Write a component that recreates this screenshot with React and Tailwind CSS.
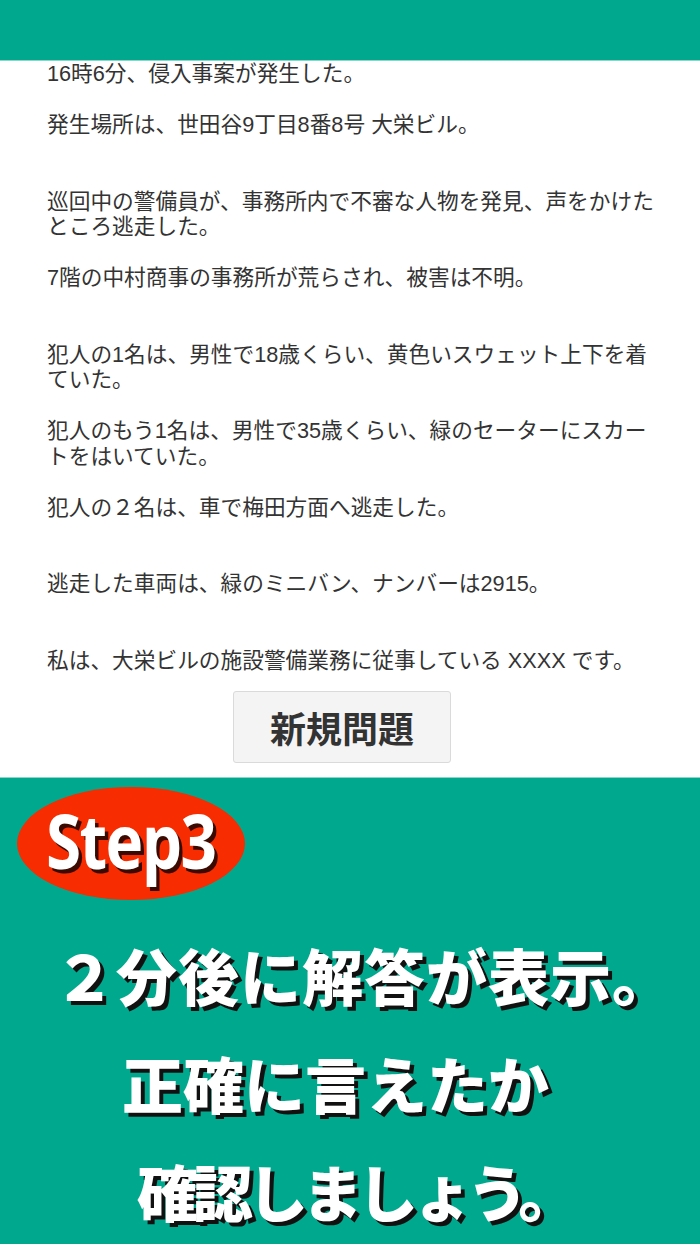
import React from 'react';

const lines = [
    '16時6分、侵入事案が発生した。',
    '',
    '発生場所は、世田谷9丁目8番8号 大栄ビル。',
    '',
    '',
    '巡回中の警備員が、事務所内で不審な人物を発見、声をかけた',
    'ところ逃走した。',
    '',
    '7階の中村商事の事務所が荒らされ、被害は不明。',
    '',
    '',
    '犯人の1名は、男性で18歳くらい、黄色いスウェット上下を着',
    'ていた。',
    '',
    '犯人のもう1名は、男性で35歳くらい、緑のセーターにスカー',
    'トをはいていた。',
    '',
    '犯人の２名は、車で梅田方面へ逃走した。',
    '',
    '',
    '逃走した車両は、緑のミニバン、ナンバーは2915。',
    '',
    '',
    '私は、大栄ビルの施設警備業務に従事している XXXX です。',
];

function App() {
    return (
        <div className="w-[700px] h-[1244px] overflow-hidden flex flex-col bg-white">
            {/* top bar */}
            <div className="h-[61px] shrink-0 bg-[#00a98e] border-b border-[#8ad7ca]" />

            {/* question text */}
            <div className="shrink-0 bg-white pl-[47px] pb-[14px]">
                <div className="text-[21.7px] text-[#333333] font-['Liberation_Sans_Narrow','Liberation_Sans','Noto_Sans_CJK_JP',sans-serif]">
                    {lines.map((line, i) => (
                        <div key={i} className="h-[25.5px] leading-[25.5px] whitespace-nowrap">
                            {line}
                        </div>
                    ))}
                </div>
                <button
                    type="button"
                    className="mt-[18px] ml-[186px] w-[218px] h-[72px] flex items-center justify-center bg-[#f4f4f4] border border-[#dadada] rounded-[3px] text-[36px] font-bold text-[#333333] font-['Noto_Sans_CJK_JP',sans-serif]"
                >
                    新規問題
                </button>
            </div>

            {/* step panel */}
            <div className="flex-1 bg-[#00a98e] border-t border-[#8ad7ca]">
                <div className="ml-[17px] mt-[9px] w-[228px] h-[113px] rounded-[50%] bg-[#f72c00] flex items-center justify-center">
                    <span className="inline-block scale-x-[0.84] text-[76px] leading-none font-bold tracking-[-2px] text-white font-['Open_Sans',sans-serif] [text-shadow:4px_4px_0_#3a0a00] -mt-[8px]">
                        Step3
                    </span>
                </div>
                <div className="mt-[21px] text-white font-black text-[61px] leading-[108px] font-['Noto_Sans_CJK_JP',sans-serif] [text-shadow:4px_4px_0_#111]">
                    <div className="pl-[54px] whitespace-nowrap tracking-[1px]">２分後に解答が表示。</div>
                    <div className="pl-[122px] whitespace-nowrap">正確に言えたか</div>
                    <div className="pl-[137px] whitespace-nowrap tracking-[-6px]">確認しましょう。</div>
                </div>
            </div>
        </div>
    );
}

export default App;
